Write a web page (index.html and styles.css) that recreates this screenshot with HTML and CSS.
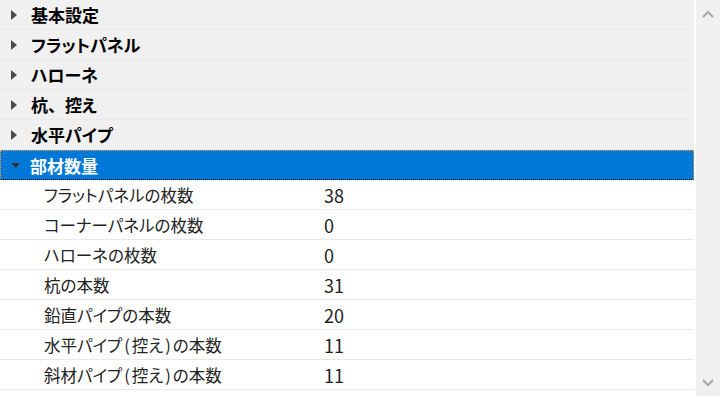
FILE: index.html
```html
<!DOCTYPE html>
<html lang="ja">
<head>
    <meta charset="UTF-8">
    <title>プロパティ</title>
    <link rel="stylesheet" href="styles.css">
</head>
<body>
    <div class="panel">
        <div class="grid">
            <div class="category"><span class="arrow"></span>基本設定</div>
            <div class="category"><span class="arrow"></span>フラットパネル</div>
            <div class="category"><span class="arrow"></span>ハローネ</div>
            <div class="category"><span class="arrow"></span>杭<span class="full">、</span>控え</div>
            <div class="category"><span class="arrow"></span>水平パイプ</div>
            <div class="category selected"><span class="arrow open"></span>部材数量</div>
            <div class="item"><span class="label">フラットパネルの枚数</span><span class="value">38</span></div>
            <div class="item"><span class="label">コーナーパネルの枚数</span><span class="value">0</span></div>
            <div class="item"><span class="label">ハローネの枚数</span><span class="value">0</span></div>
            <div class="item"><span class="label">杭の本数</span><span class="value">31</span></div>
            <div class="item"><span class="label">鉛直パイプの本数</span><span class="value">20</span></div>
            <div class="item"><span class="label">水平パイプ<span class="paren">(</span>控え<span class="paren">)</span>の本数</span><span class="value">11</span></div>
            <div class="item"><span class="label">斜材パイプ<span class="paren">(</span>控え<span class="paren">)</span>の本数</span><span class="value">11</span></div>
        </div>
        <div class="scrollbar">
            <svg width="12" height="8" viewBox="0 0 12 8"><path d="M1 7 L6 2 L11 7" fill="none" stroke="#a6a6a6" stroke-width="2"/></svg>
            <svg width="12" height="8" viewBox="0 0 12 8"><path d="M1 1 L6 6 L11 1" fill="none" stroke="#a6a6a6" stroke-width="2"/></svg>
        </div>
    </div>
</body>
</html>
```

FILE: styles.css
```css
* {
    margin: 0;
    padding: 0;
    box-sizing: border-box;
}

body {
    width: 720px;
    height: 396px;
    overflow: hidden;
    background: #ffffff;
    font-family: "Noto Sans CJK JP", "Noto Sans", sans-serif;
    font-feature-settings: "palt";
}

.panel {
    display: flex;
    height: 396px;
}

.grid {
    width: 694px;
    background: #ffffff;
}

.category {
    height: 30px;
    display: flex;
    align-items: center;
    background: #f0f0f0;
    border-bottom: 1px solid #e9e9e9;
    font-size: 17px;
    font-weight: bold;
    color: #000000;
    padding-left: 11px;
}

.full {
    font-feature-settings: normal;
}

.arrow {
    width: 0;
    height: 0;
    margin-right: 14px;
    border-top: 5px solid transparent;
    border-bottom: 5px solid transparent;
    border-left: 6px solid #4a4a4a;
}

.arrow.open {
    margin-right: 10px;
    border-left: 5px solid transparent;
    border-right: 4px solid transparent;
    border-top: 5px solid #333333;
    border-bottom: none;
}

.category.selected {
    background: #0078d7;
    color: #ffffff;
    border-top: 1px dotted #f0a040;
    border-left: 1px dotted #f0a040;
    border-right: 1px dotted #f0a040;
    border-bottom: 1px dotted #000000;
    padding-left: 10px;
}

.item {
    height: 30px;
    display: flex;
    align-items: center;
    border-bottom: 1px solid #e8e8e8;
    font-size: 16.5px;
    color: #222222;
}

.label {
    width: 324px;
    padding-left: 44px;
}

.paren {
    margin: 0 2px;
}

.value {
    font-size: 18px;
}

.scrollbar {
    margin-left: 2px;
    width: 24px;
    background: #f0f0f0;
    display: flex;
    flex-direction: column;
    justify-content: space-between;
    align-items: center;
    padding: 10px 0 9px;
}
```
